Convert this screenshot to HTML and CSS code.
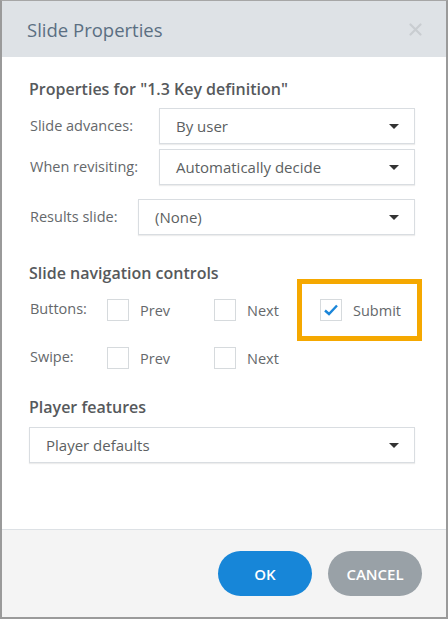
FILE: index.html
```html
<!DOCTYPE html>
<html>
<head>
<meta charset="utf-8">
<link rel="stylesheet" href="styles.css">
</head>
<body>
<div class="dialog">
  <header class="hd">
    <h1 class="title">Slide Properties</h1>
    <svg class="close" width="13" height="13" viewBox="0 0 13 13"><path d="M1.5 1.5 L11.5 11.5 M11.5 1.5 L1.5 11.5" stroke="#c9cdd1" stroke-width="2.2" stroke-linecap="round"/></svg>
  </header>
  <main class="bd">
    <h2 class="sec sec-first">Properties for "1.3 Key definition"</h2>
    <div class="grid2">
      <span class="lbl">Slide advances:</span>
      <div class="select"><span>By user</span><i class="caret"></i></div>
      <span class="lbl">When revisiting:</span>
      <div class="select"><span>Automatically decide</span><i class="caret"></i></div>
    </div>
    <div class="row3">
      <span class="lbl">Results slide:</span>
      <div class="select"><span>(None)</span><i class="caret"></i></div>
    </div>

    <h2 class="sec sec-nav">Slide navigation controls</h2>
    <div class="navgrid">
      <span class="lbl nl">Buttons:</span>
      <span class="opt"><span class="cb"></span>Prev</span>
      <span class="opt"><span class="cb"></span>Next</span>
      <span class="opt hl"><span class="cb"><svg width="16" height="14" viewBox="0 0 16 14"><path d="M2 7.5 L6 11 L14 2.5" fill="none" stroke="#1b86d9" stroke-width="2.4"/></svg></span>Submit</span>
      <span class="lbl nl">Swipe:</span>
      <span class="opt"><span class="cb"></span>Prev</span>
      <span class="opt"><span class="cb"></span>Next</span>
    </div>

    <h2 class="sec sec-player">Player features</h2>
    <div class="select select-wide"><span>Player defaults</span><i class="caret"></i></div>
  </main>
  <footer class="ft">
    <button class="btn ok">OK</button>
    <button class="btn cancel">CANCEL</button>
  </footer>
</div>
</body>
</html>
```
FILE: styles.css
```css
* { box-sizing: border-box; }
html, body { margin: 0; padding: 0; background: #fff; }
body { font-family: "Open Sans", "Noto Sans", sans-serif; }

.dialog {
  width: 448px;
  height: 619px;
  border: 2px solid #9a9a9a;
  border-top: 1px solid #a6a6a6;
  display: flex;
  flex-direction: column;
  background: #fff;
}

.hd {
  height: 56px;
  background: #dee2e6;
  display: flex;
  align-items: center;
  justify-content: space-between;
  padding: 0 24px 0 25px;
  flex: none;
}
.title {
  margin: 0;
  font-size: 18.5px;
  font-weight: 400;
  color: #5b6f82;
  line-height: 24px;
  position: relative;
  top: 1px;
}
.close { display: block; }

.bd {
  flex: 1;
  padding: 22px 31px 0 27px;
  color: #666a6e;
  font-size: 14.5px;
}

.sec {
  margin: 0;
  font-size: 16px;
  font-weight: 600;
  color: #56595c;
  line-height: 20px;
}
.sec-nav { margin-top: 28px; }
.sec-player { margin-top: 28px; }

.lbl { line-height: 20px; color: #65686b; padding-left: 1px; font-size: 14.5px; }

.grid2 {
  margin-top: 9px;
  display: grid;
  grid-template-columns: 130px 1fr;
  row-gap: 5px;
  align-items: center;
}
.row3 {
  margin-top: 14px;
  display: grid;
  grid-template-columns: 109px 1fr;
  align-items: center;
}

.select {
  height: 36px;
  border: 1px solid #d9dde1;
  box-shadow: 0 1px 1px rgba(0,0,0,0.07);
  background: #fff;
  display: flex;
  align-items: center;
  justify-content: space-between;
  padding: 0 15px 0 16px;
  color: #5c5f62;
  font-size: 15px;
}
.select-wide { margin-top: 10px; }
.caret {
  width: 0;
  height: 0;
  border-left: 5px solid transparent;
  border-right: 5px solid transparent;
  border-top: 5px solid #333;
}

.navgrid {
  margin-top: 16px;
  display: grid;
  grid-template-columns: 78px 107px 106px auto;
  row-gap: 26px;
  align-items: start;
}
.nl { padding-left: 1px; }
.opt {
  display: flex;
  align-items: center;
  gap: 11px;
  height: 22px;
  color: #65686b;
  line-height: 22px;
  padding-top: 1px;
  font-size: 14.5px;
}
.cb {
  width: 22px;
  height: 22px;
  border: 1px solid #d6dadd;
  background: #fff;
  flex: none;
  display: flex;
  align-items: center;
  justify-content: center;
  margin-top: -1px;
}
.hl {
  justify-self: start;
  outline: 5px solid #f5a800;
  outline-offset: 15px;
  margin-left: -3px;
  padding-left: 3px;
  padding-right: 1px;
}

.ft {
  flex: none;
  height: 88px;
  border-top: 1px solid #dde1e5;
  background: #f4f4f4;
  display: flex;
  justify-content: flex-end;
  align-items: center;
  gap: 16px;
  padding: 0 24px 0 0;
}
.btn {
  width: 94px;
  height: 45px;
  border-radius: 23px;
  border: none;
  font-family: "Open Sans", "Noto Sans", sans-serif;
  font-size: 15px;
  font-weight: 600;
  color: #fff;
  padding: 0;
}
.ok { background: #1786d8; }
.cancel { background: #99a1a7; }
```
